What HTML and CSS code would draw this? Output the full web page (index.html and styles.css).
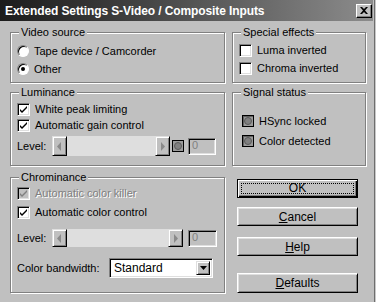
FILE: index.html
```html
<!DOCTYPE html>
<html lang="en">
<head>
    <meta charset="UTF-8">
    <title>Extended Settings S-Video / Composite Inputs</title>
    <link rel="stylesheet" href="styles.css">
</head>
<body>
    <div class="window">
        <div class="titlebar">
            <span class="title">Extended Settings S-Video / Composite Inputs</span>
            <span class="close">
                <svg width="8" height="7" viewBox="0 0 8 7"><path d="M0 0h2l2 2 2-2h2L5 3.5 8 7H6L4 5 2 7H0l3-3.5z" fill="#000"/></svg>
            </span>
        </div>

        <div class="main">
            <div class="col-left">
                <div class="group video">
                    <div class="group-title">Video source</div>
                    <div class="row r18 first"><span class="radio"></span>Tape device / Camcorder</div>
                    <div class="row r18"><span class="radio checked"></span>Other</div>
                </div>

                <div class="group lum">
                    <div class="group-title">Luminance</div>
                    <div class="row first"><span class="check on"><svg width="9" height="9" viewBox="0 0 9 9"><path d="M1 4l2 2 5-5v2L3 8 1 6z" fill="#000"/></svg></span>White peak limiting</div>
                    <div class="row"><span class="check on"><svg width="9" height="9" viewBox="0 0 9 9"><path d="M1 4l2 2 5-5v2L3 8 1 6z" fill="#000"/></svg></span>Automatic gain control</div>
                    <div class="slider-row">
                        <span class="lbl">Level:</span>
                        <div class="slider short">
                            <span class="arrow"><svg width="5" height="9" viewBox="0 0 5 9"><path d="M4 0v9L0 4.5z" fill="#8a8a8a"/></svg></span>
                            <span class="track"></span>
                            <span class="arrow"><svg width="5" height="9" viewBox="0 0 5 9"><path d="M1 0v9l4-4.5z" fill="#8a8a8a"/></svg></span>
                        </div>
                        <span class="led"><span class="dot"></span></span>
                        <span class="edit">0</span>
                    </div>
                </div>

                <div class="group chroma">
                    <div class="group-title">Chrominance</div>
                    <div class="row first disabled"><span class="check on off"><svg width="9" height="9" viewBox="0 0 9 9"><path d="M1 4l2 2 5-5v2L3 8 1 6z" fill="#808080"/></svg></span>Automatic color killer</div>
                    <div class="row second"><span class="check on"><svg width="9" height="9" viewBox="0 0 9 9"><path d="M1 4l2 2 5-5v2L3 8 1 6z" fill="#000"/></svg></span>Automatic color control</div>
                    <div class="slider-row low">
                        <span class="lbl">Level:</span>
                        <div class="slider long">
                            <span class="arrow"><svg width="5" height="9" viewBox="0 0 5 9"><path d="M4 0v9L0 4.5z" fill="#8a8a8a"/></svg></span>
                            <span class="track"></span>
                            <span class="arrow"><svg width="5" height="9" viewBox="0 0 5 9"><path d="M1 0v9l4-4.5z" fill="#8a8a8a"/></svg></span>
                        </div>
                        <span class="edit wide">0</span>
                    </div>
                    <div class="combo-row">
                        <span class="lbl wide">Color bandwidth:</span>
                        <div class="combo">
                            <span class="value">Standard</span>
                            <span class="drop"><svg width="7" height="4" viewBox="0 0 7 4"><path d="M0 0h7L3.5 4z" fill="#000"/></svg></span>
                        </div>
                    </div>
                </div>
            </div>

            <div class="col-right">
                <div class="group effects">
                    <div class="group-title">Special effects</div>
                    <div class="row r18 first"><span class="check"></span>Luma inverted</div>
                    <div class="row r18"><span class="check"></span>Chroma inverted</div>
                </div>

                <div class="group status">
                    <div class="group-title">Signal status</div>
                    <div class="row led-row first"><span class="led big"><span class="dot"></span></span>HSync locked</div>
                    <div class="row led-row"><span class="led big"><span class="dot"></span></span>Color detected</div>
                </div>

                <div class="buttons">
                    <button class="btn default"><span class="focus">OK</span></button>
                    <button class="btn cancel"><u>C</u>ancel</button>
                    <button class="btn help"><u>H</u>elp</button>
                    <button class="btn defaults"><u>D</u>efaults</button>
                </div>
            </div>
        </div>
    </div>
</body>
</html>
```

FILE: styles.css
```css
html, body {
    margin: 0;
    padding: 0;
}
body {
    font-family: "Liberation Sans", Arial, sans-serif;
    font-size: 11px;
    color: #000;
    background: #c0c0c0;
}
.window {
    width: 376px;
    height: 302px;
    box-sizing: border-box;
    padding-right: 2px;
    background: #c0c0c0;
    border-right: 1px solid #c8c8c8;
    box-shadow: inset -1px 0 #6e6e6e;
}

/* title bar */
.titlebar {
    height: 21px;
    display: flex;
    align-items: center;
    padding: 0 1px 0 5px;
    background: linear-gradient(90deg, #1c1c1c, #3a3a3a 30%, #8c8c8c);
    color: #fff;
}
.title {
    font-size: 12px;
    font-weight: bold;
    letter-spacing: -0.1px;
}
.close {
    margin-left: auto;
    width: 16px;
    height: 14px;
    box-sizing: border-box;
    display: flex;
    align-items: center;
    justify-content: center;
    background: #c0c0c0;
    border: 1px solid;
    border-color: #fff #000 #000 #fff;
    box-shadow: inset -1px -1px #808080;
}

/* layout */
.main {
    display: flex;
    gap: 7px;
    padding: 11px 0 0 10px;
}
.col-left {
    width: 215px;
    display: flex;
    flex-direction: column;
}
.col-right {
    width: 134px;
    display: flex;
    flex-direction: column;
}

/* group boxes */
.group {
    box-sizing: border-box;
    border: 1px solid #808080;
    box-shadow: inset 1px 1px #fff, 1px 1px #fff;
    padding: 0 4px 0 5px;
}
.group-title {
    display: table;
    margin: -8px 0 0 3px;
    padding: 0 2px;
    line-height: 14px;
    background: #c0c0c0;
}
.video, .effects { height: 51px; }
.lum, .status { height: 74px; margin-top: 9px; }
.chroma { height: 116px; margin-top: 11px; }

.row {
    display: flex;
    align-items: center;
    height: 16px;
    white-space: nowrap;
}
.row.r18 { height: 18px; }
.video .row.first { margin-top: 3px; }
.effects .row.first { margin-top: 2px; }
.lum .row.first { margin-top: 2px; }
.chroma .row.first { margin-top: 1px; }
.chroma .row.second { margin-top: 3px; }
.status .row.first { margin-top: 14px; }
.status .row + .row { margin-top: 4px; }

.disabled {
    color: #808080;
    text-shadow: 1px 1px #fff;
}

/* radio and check */
.radio {
    width: 12px;
    height: 12px;
    box-sizing: border-box;
    margin: 0 5px 0 1px;
    border-radius: 50%;
    border: 1px solid;
    border-color: #808080 #fff #fff #808080;
    background: #fff;
    box-shadow: inset 1px 1px #000;
    position: relative;
}
.radio.checked::after {
    content: "";
    position: absolute;
    left: 3px;
    top: 3px;
    width: 4px;
    height: 4px;
    border-radius: 50%;
    background: #000;
}
.check {
    width: 13px;
    height: 13px;
    box-sizing: border-box;
    margin: 0 5px 0 1px;
    border: 1px solid;
    border-color: #808080 #fff #fff #808080;
    background: #fff;
    box-shadow: inset 1px 1px #000, inset -1px -1px #dfdfdf;
    display: flex;
    align-items: center;
    justify-content: center;
}
.check.off {
    background: #c0c0c0;
}
.effects .check { margin-left: 1px; }

/* sliders */
.slider-row {
    display: flex;
    align-items: center;
    margin-top: 3px;
    height: 20px;
}
.slider-row.low {
    margin-top: 9px;
    height: 18px;
}
.lbl {
    width: 36px;
    padding-left: 1px;
    box-sizing: border-box;
}
.lbl.wide { width: 93px; }
.slider {
    display: flex;
    height: 100%;
}
.slider.short { width: 118px; }
.slider.long { width: 131px; }
.arrow {
    width: 15px;
    box-sizing: border-box;
    display: flex;
    align-items: center;
    justify-content: center;
    background: #c0c0c0;
    border: 1px solid;
    border-color: #dfdfdf #000 #000 #dfdfdf;
    box-shadow: inset 1px 1px #fff, inset -1px -1px #808080;
}
.track {
    flex: 1;
    background: #dedede;
}
.led {
    width: 12px;
    height: 12px;
    box-sizing: border-box;
    margin-left: 2px;
    border: 1px solid #000;
    background: #9a9a9a;
    display: flex;
    align-items: center;
    justify-content: center;
}
.led .dot {
    width: 8px;
    height: 8px;
    box-sizing: border-box;
    border-radius: 50%;
    border: 1px solid #5a5a5a;
    background: #808080;
}
.led.big {
    margin: 0 5px 0 4px;
    box-shadow: inset 1px 1px #606060;
}
.edit {
    width: 28px;
    height: 17px;
    box-sizing: border-box;
    margin-left: 4px;
    padding-left: 3px;
    line-height: 13px;
    color: #808080;
    border: 1px solid;
    border-color: #808080 #fff #fff #808080;
    box-shadow: inset 1px 1px #000, inset -1px -1px #dfdfdf;
}
.edit.wide {
    width: 29px;
    margin-left: 5px;
}

/* combo */
.combo-row {
    display: flex;
    align-items: center;
    margin-top: 11px;
}
.combo {
    width: 104px;
    height: 20px;
    box-sizing: border-box;
    display: flex;
    align-items: center;
    background: #fff;
    border: 1px solid;
    border-color: #808080 #fff #fff #808080;
    box-shadow: inset 1px 1px #000, inset -1px -1px #dfdfdf;
    padding: 2px 2px 2px 4px;
}
.combo .value {
    flex: 1;
    font-size: 12px;
}
.drop {
    width: 14px;
    height: 100%;
    box-sizing: border-box;
    display: flex;
    align-items: center;
    justify-content: center;
    background: #c0c0c0;
    border: 1px solid;
    border-color: #dfdfdf #000 #000 #dfdfdf;
    box-shadow: inset 1px 1px #fff, inset -1px -1px #808080;
}

/* buttons */
.buttons {
    display: flex;
    flex-direction: column;
    padding-left: 5px;
}
.btn {
    width: 121px;
    height: 19px;
    box-sizing: border-box;
    padding: 0;
    font-family: inherit;
    font-size: 12px;
    color: #000;
    background: #c0c0c0;
    border: 1px solid;
    border-color: #fff #000 #000 #fff;
    box-shadow: inset 1px 1px #dfdfdf, inset -1px -1px #808080;
}
.btn.default {
    margin-top: 13px;
    border: 1px solid #000;
    box-shadow: inset 1px 1px #fff, inset -1px -1px #000, inset -2px -2px #808080;
    padding: 3px;
    display: flex;
}
.btn.default .focus {
    flex: 1;
    border: 1px dotted #000;
    line-height: 9px;
}
.btn.cancel { margin-top: 9px; }
.btn.help { margin-top: 11px; }
.btn.defaults { margin-top: 17px; height: 20px; }
```
